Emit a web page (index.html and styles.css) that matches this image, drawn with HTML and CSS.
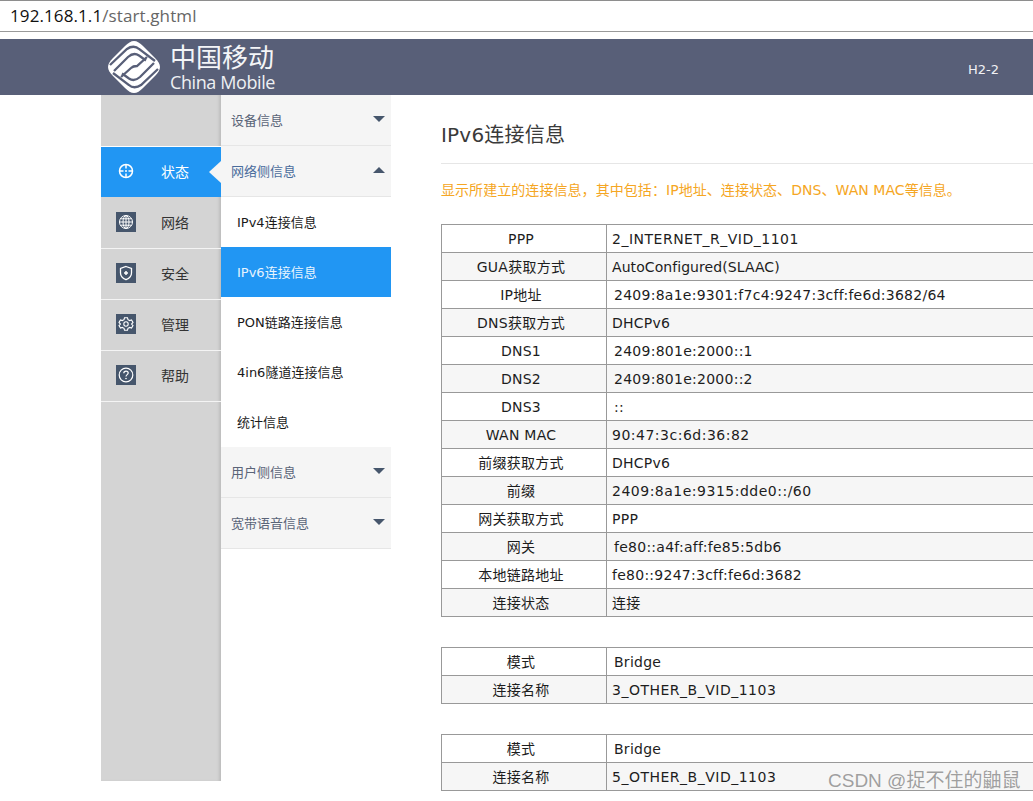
FILE: index.html
```html
<!DOCTYPE html>
<html lang="zh">
<head>
<meta charset="utf-8">
<title>IPv6连接信息</title>
<link rel="stylesheet" href="styles.css">
</head>
<body>
<div class="urlbar"><span class="host">192.168.1.1</span><span class="path">/start.ghtml</span></div>
<header class="banner">
  <div class="brand">
    <svg class="logo" viewBox="0 0 54 54" width="54" height="54" fill="none" stroke="#585f78" stroke-width="2.300">
      <path d="M27 1C30 1 33 3 36 6L48 18C51 21 53 24 53 27C53 30 51 33 48 36L36 48C33 51 30 53 27 53C24 53 21 51 18 48L6 36C3 33 1 30 1 27C1 24 3 21 6 18L18 6C21 3 24 1 27 1Z" fill="#fff" stroke="none"/>
      <path d="M3 25L20 9C24 6 29 6 32 9L48 21"/>
      <path d="M7 31L21 17C25 13.500 29 13.500 32 15.500L39 20.500"/>
      <path d="M51 29L34 45C30 48 25 48 22 45L6 33"/>
      <path d="M47 23L33 37C29 40.500 25 40.500 22 38.500L15 33.500"/>
      <path d="M14 37L24 28C26 26 28 26 30 26L40 17"/>
    </svg>
    <div class="brand-text">
      <div class="brand-cn">中国移动</div>
      <div class="brand-en">China Mobile</div>
    </div>
  </div>
  <div class="model">H2-2</div>
</header>
<div class="main">
  <nav class="side">
    <div class="side-blank"></div>
    <div class="side-item active">
      <span class="side-icon plain"><svg viewBox="0 0 20 20" width="20" height="20" fill="none" stroke="#fff" stroke-width="1.500"><circle cx="10" cy="10" r="6.500"/><circle cx="10" cy="10" r="1" fill="#fff" stroke="none"/><path d="M10 4V7.500M10 12.500V16M4 10H7.500M12.500 10H16"/></svg></span>
      <span class="side-label">状态</span>
      <span class="notch"></span>
    </div>
    <div class="side-item">
      <span class="side-icon"><svg viewBox="0 0 20 20" width="20" height="20" fill="none" stroke="#fff" stroke-width="1"><circle cx="10" cy="10" r="6.500"/><ellipse cx="10" cy="10" rx="3" ry="6.500"/><path d="M10 3.500V16.500M3.500 10H16.500M4.500 6.800H15.500M4.500 13.200H15.500"/></svg></span>
      <span class="side-label">网络</span>
    </div>
    <div class="side-item">
      <span class="side-icon"><svg viewBox="0 0 20 20" width="20" height="20" fill="none" stroke="#fff" stroke-width="1.300"><path d="M10 3.500L15.500 5.500V10C15.500 13 13 15.500 10 16.700C7 15.500 4.500 13 4.500 10V5.500Z"/><path d="M10 8V12M8 10H12" stroke-width="1.500"/></svg></span>
      <span class="side-label">安全</span>
    </div>
    <div class="side-item">
      <span class="side-icon"><svg viewBox="0 0 20 20" width="20" height="20" fill="none" stroke="#fff" stroke-width="1.100"><path d="M8.500 3.800H11.500L12 5.700L13.700 6.600L15.500 6L17 8.500L15.600 10L17 11.500L15.500 14L13.700 13.400L12 14.300L11.500 16.200H8.500L8 14.300L6.300 13.400L4.500 14L3 11.500L4.400 10L3 8.500L4.500 6L6.300 6.600L8 5.700Z"/><circle cx="10" cy="10" r="2.200"/></svg></span>
      <span class="side-label">管理</span>
    </div>
    <div class="side-item">
      <span class="side-icon"><svg viewBox="0 0 20 20" width="20" height="20" fill="none" stroke="#fff" stroke-width="1.200"><circle cx="10" cy="10" r="6.800"/><path d="M7.800 8.300C7.800 7 8.800 6.200 10 6.200C11.300 6.200 12.200 7 12.200 8.100C12.200 9.600 10 9.700 10 11.500"/><circle cx="10" cy="13.500" r=".8" fill="#fff" stroke="none"/></svg></span>
      <span class="side-label">帮助</span>
    </div>
  </nav>
  <div class="sub">
    <div class="sub-head"><span>设备信息</span><span class="caret down"></span></div>
    <div class="sub-head open"><span>网络侧信息</span><span class="caret up"></span></div>
    <div class="sub-item">IPv4连接信息</div>
    <div class="sub-item current">IPv6连接信息</div>
    <div class="sub-item">PON链路连接信息</div>
    <div class="sub-item">4in6隧道连接信息</div>
    <div class="sub-item">统计信息</div>
    <div class="sub-head"><span>用户侧信息</span><span class="caret down"></span></div>
    <div class="sub-head"><span>宽带语音信息</span><span class="caret down"></span></div>
  </div>
  <main class="content">
    <h1 class="title">IPv6连接信息</h1>
    <p class="hint">显示所建立的连接信息，其中包括：IP地址、连接状态、DNS、WAN MAC等信息。</p>
    <table class="info">
      <tr><th>PPP</th><td class="wide">2_INTERNET_R_VID_1101</td></tr>
      <tr><th>GUA获取方式</th><td class="tight">AutoConfigured(SLAAC)</td></tr>
      <tr><th>IP地址</th><td class="indent">2409:8a1e:9301:f7c4:9247:3cff:fe6d:3682/64</td></tr>
      <tr><th>DNS获取方式</th><td>DHCPv6</td></tr>
      <tr><th>DNS1</th><td class="indent">2409:801e:2000::1</td></tr>
      <tr><th>DNS2</th><td class="indent">2409:801e:2000::2</td></tr>
      <tr><th>DNS3</th><td class="indent">::</td></tr>
      <tr><th>WAN MAC</th><td class="wide">90:47:3c:6d:36:82</td></tr>
      <tr><th>前缀获取方式</th><td>DHCPv6</td></tr>
      <tr><th>前缀</th><td class="wide">2409:8a1e:9315:dde0::/60</td></tr>
      <tr><th>网关获取方式</th><td>PPP</td></tr>
      <tr><th>网关</th><td class="indent">fe80::a4f:aff:fe85:5db6</td></tr>
      <tr><th>本地链路地址</th><td>fe80::9247:3cff:fe6d:3682</td></tr>
      <tr><th>连接状态</th><td>连接</td></tr>
    </table>
    <table class="info">
      <tr><th>模式</th><td class="indent">Bridge</td></tr>
      <tr><th>连接名称</th><td class="wide">3_OTHER_B_VID_1103</td></tr>
    </table>
    <table class="info">
      <tr><th>模式</th><td class="indent">Bridge</td></tr>
      <tr><th>连接名称</th><td class="wide">5_OTHER_B_VID_1103</td></tr>
    </table>
  </main>
</div>
<div class="watermark">CSDN @捉不住的鼬鼠</div>
</body>
</html>
```

FILE: styles.css
```css
* { box-sizing: border-box; }
html, body { margin: 0; height: 801px; overflow: hidden; background: #fff; }
body {
  position: relative;
  font-family: "DejaVu Sans", "Noto Sans CJK SC", sans-serif;
  font-size: 13px;
  color: #222;
}
.urlbar {
  height: 32px;
  border-top: 1px solid #8e8e8e;
  border-bottom: 1px solid #9a9a9a;
  padding: 4px 0 0 10px;
  font-family: "Open Sans", "Noto Sans", sans-serif;
  font-size: 17px;
  letter-spacing: .1px;
  line-height: 22px;
  white-space: nowrap;
}
.host { color: #111; }
.path { color: #666; }
.banner {
  height: 56px;
  margin-top: 7px;
  padding: 0 34px 0 107px;
  background: #585f78;
  display: flex;
  align-items: center;
  justify-content: space-between;
  color: #fff;
}
.brand { display: flex; align-items: center; gap: 9px; }
.logo { display: block; }
.brand-text { display: flex; flex-direction: column; align-items: flex-start; }
.brand-cn { font-family: "Noto Sans CJK SC", sans-serif; font-size: 26px; line-height: 30px; color: #f4f5f7; }
.brand-en { font-family: "Open Sans", sans-serif; font-size: 18px; line-height: 22px; letter-spacing: -.4px; color: #eef0f3; }
.model { font-size: 13px; padding-top: 4px; color: #f0f1f4; }
.main { display: flex; align-items: flex-start; height: 706px; padding-left: 101px; }
.side {
  width: 120px;
  height: 686px;
  flex: none;
  background: #d4d4d4;
  box-shadow: inset -3px 0 3px -1px #bdbdbd;
}
.side-blank { height: 52px; border-bottom: 1px solid #fff; }
.side-item {
  position: relative;
  height: 51px;
  border-bottom: 1px solid #f4f4f4;
  display: flex;
  align-items: center;
  padding: 0 0 2px 15px;
  color: #333;
  font-size: 14px;
}
.side-icon {
  width: 20px;
  height: 20px;
  background: #46566c;
  display: flex;
  flex: none;
}
.side-icon.plain { background: none; }
.side-label { margin-left: 25px; }
.active {
  height: 50px;
  margin-bottom: 1px;
  width: 120px;
  background: #2196f3;
  color: #fff;
  border-bottom: 0;
}
.notch {
  position: absolute;
  right: 0;
  top: 14px;
  width: 0;
  height: 0;
  border-style: solid;
  border-width: 11px 12px 11px 0;
  border-color: transparent #f5f5f5 transparent transparent;
}
.sub { width: 170px; flex: none; }
.sub-head {
  height: 51px;
  background: #f5f5f5;
  border-bottom: 1px solid #e6e6e6;
  display: flex;
  align-items: center;
  justify-content: space-between;
  padding: 0 6px 2px 10px;
  color: #5a6478;
  font-size: 13px;
}
.sub-head.open { color: #4a6c9c; }
.caret { width: 0; height: 0; border-style: solid; border-color: transparent; }
.caret.down { border-width: 6px 6px 0; border-top-color: #46566c; }
.caret.up { border-width: 0 6px 6px; border-bottom-color: #46566c; }
.sub-item {
  height: 50px;
  display: flex;
  align-items: center;
  padding: 0 0 2px 16px;
  color: #1a1a1a;
  font-size: 13px;
}
.sub-item.current { background: #2196f3; color: #e8f4fe; }
.content { flex: none; width: 800px; margin-left: 50px; }
.title {
  margin: 0;
  height: 69px;
  padding-top: 26px;
  font-weight: 400;
  font-size: 20px;
  line-height: 28px;
  letter-spacing: .2px;
  color: #3a3a3a;
  border-bottom: 1px solid #e6e6e6;
}
.hint { margin: 16px 0 24px; height: 20px; line-height: 20px; font-size: 14px; letter-spacing: .06px; color: #f5a623; white-space: nowrap; }
.info { width: 800px; border-collapse: collapse; table-layout: fixed; margin-bottom: 30px; }
.info th, .info td {
  height: 28px;
  padding: 1px 5px 0;
  border: 1px solid #999;
  font-size: 14px;
  letter-spacing: .26px;
  font-weight: 400;
  line-height: 18px;
  color: #1d1d1d;
}
.info th { width: 165px; padding-right: 11px; text-align: center; }
.info td.indent { padding-left: 7px; }
.info td.wide { letter-spacing: .5px; }
.info td.tight { letter-spacing: .07px; }
.info tr:nth-child(even) th, .info tr:nth-child(even) td { background: #f6f6f6; }
.watermark {
  position: absolute;
  left: 828px;
  top: 769px;
  font-family: "Liberation Sans", "Noto Sans CJK SC", sans-serif;
  font-size: 19px;
  line-height: 24px;
  color: rgba(120, 120, 120, .7);
  white-space: nowrap;
}
```
